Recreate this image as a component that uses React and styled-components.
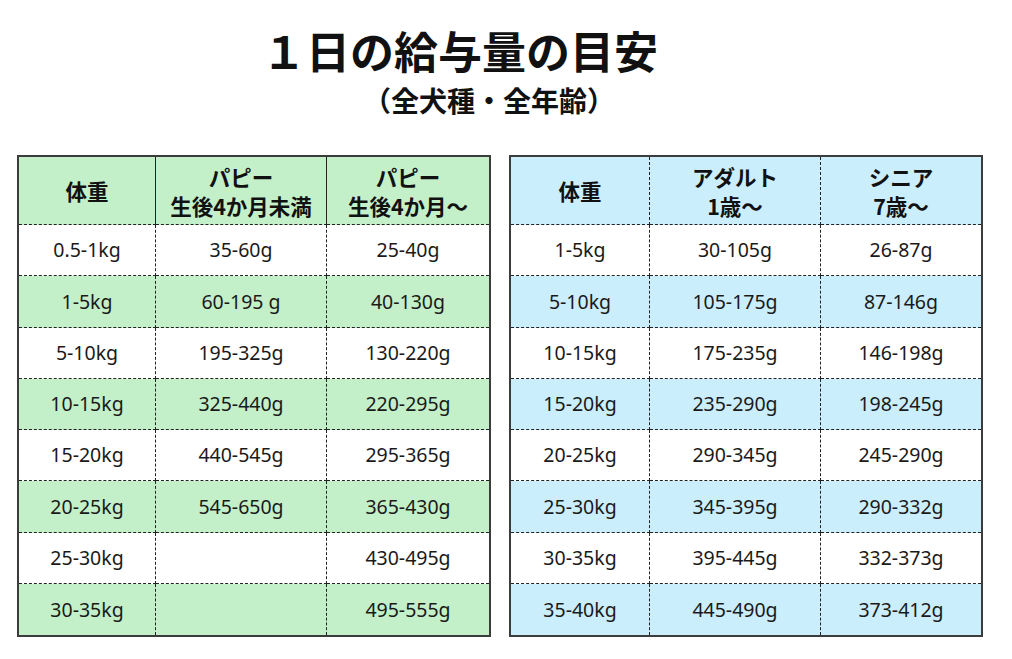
import React from "react";
import styled, { createGlobalStyle } from "styled-components";

const Global = createGlobalStyle`
  html, body { margin: 0; padding: 0; background: #ffffff; }
  body { font-family: "Noto Sans", "Noto Sans CJK JP", sans-serif; color: #111; }
`;

const Page = styled.div`
  width: 1012px;
  height: 659px;
  box-sizing: border-box;
  padding: 28px 0 0 17px;
`;

const Heading = styled.header`
  display: flex;
  flex-direction: column;
`;

const Title = styled.h1`
  margin: 0 0 0 245px;
  font-family: "Noto Sans CJK JP", sans-serif;
  font-size: 44px;
  line-height: 44px;
  font-weight: 700;
  color: #111;
`;

const Subtitle = styled.h2`
  margin: 14px 0 0 346px;
  font-family: "Noto Sans CJK JP", sans-serif;
  font-size: 28px;
  line-height: 28px;
  font-weight: 700;
  color: #111;
`;

const Tables = styled.div`
  display: flex;
  gap: 18px;
  margin-top: 41px;
`;

const Table = styled.div`
  display: grid;
  grid-template-columns: ${(p) => p.$cols};
  grid-template-rows: 68px repeat(8, 1fr);
  width: ${(p) => p.$width}px;
  height: 482px;
  box-sizing: border-box;
  border: 2px solid #3c3c3c;
`;

const Cell = styled.div`
  display: flex;
  align-items: center;
  justify-content: center;
  text-align: center;
  background: ${(p) => (p.$tint ? p.$color : "#ffffff")};
  border-right: ${(p) => (p.$lastCol ? "none" : p.$solid ? "1px solid #222" : "1px dashed #222")};
  border-bottom: ${(p) => (p.$lastRow ? "none" : "1px dashed #222")};
  font-size: 19.5px;
  color: #1a1a1a;
  line-height: 1;
`;

const HeadCell = styled(Cell)`
  font-family: "Noto Sans CJK JP", "Noto Sans", sans-serif;
  font-weight: 700;
  font-size: 21.5px;
  line-height: 29px;
  color: #111;
`;

const GREEN = "#c3f0c9";
const BLUE = "#cbeefc";

const puppy = {
  head: ["体重", "パピー\n生後4か月未満", "パピー\n生後4か月〜"],
  rows: [
    ["0.5-1kg", "35-60g", "25-40g"],
    ["1-5kg", "60-195 g", "40-130g"],
    ["5-10kg", "195-325g", "130-220g"],
    ["10-15kg", "325-440g", "220-295g"],
    ["15-20kg", "440-545g", "295-365g"],
    ["20-25kg", "545-650g", "365-430g"],
    ["25-30kg", "", "430-495g"],
    ["30-35kg", "", "495-555g"],
  ],
};

const adult = {
  head: ["体重", "アダルト\n1歳〜", "シニア\n7歳〜"],
  rows: [
    ["1-5kg", "30-105g", "26-87g"],
    ["5-10kg", "105-175g", "87-146g"],
    ["10-15kg", "175-235g", "146-198g"],
    ["15-20kg", "235-290g", "198-245g"],
    ["20-25kg", "290-345g", "245-290g"],
    ["25-30kg", "345-395g", "290-332g"],
    ["30-35kg", "395-445g", "332-373g"],
    ["35-40kg", "445-490g", "373-412g"],
  ],
};

function Lines({ text }) {
  const parts = text.split("\n");
  return (
    <span>
      {parts.map((t, i) => (
        <React.Fragment key={i}>
          {i > 0 && <br />}
          {t}
        </React.Fragment>
      ))}
    </span>
  );
}

function FeedTable({ data, cols, width, color, solidHead }) {
  return (
    <Table $cols={cols} $width={width}>
      {data.head.map((h, c) => (
        <HeadCell key={"h" + c} $tint $color={color} $lastCol={c === 2} $solid={solidHead}>
          <Lines text={h} />
        </HeadCell>
      ))}
      {data.rows.map((row, r) =>
        row.map((v, c) => (
          <Cell
            key={r + "-" + c}
            $tint={r % 2 === 1}
            $color={color}
            $lastCol={c === 2}
            $lastRow={r === data.rows.length - 1}
          >
            {v}
          </Cell>
        ))
      )}
    </Table>
  );
}

export default function App() {
  return (
    <>
      <Global />
      <Page>
        <Heading>
          <Title>１日の給与量の目安</Title>
          <Subtitle>（全犬種・全年齢）</Subtitle>
        </Heading>
        <Tables>
          <FeedTable data={puppy} cols="137px 171px 1fr" width={474} color={GREEN} solidHead />
          <FeedTable data={adult} cols="139px 171px 1fr" width={474} color={BLUE} />
        </Tables>
      </Page>
    </>
  );
}
